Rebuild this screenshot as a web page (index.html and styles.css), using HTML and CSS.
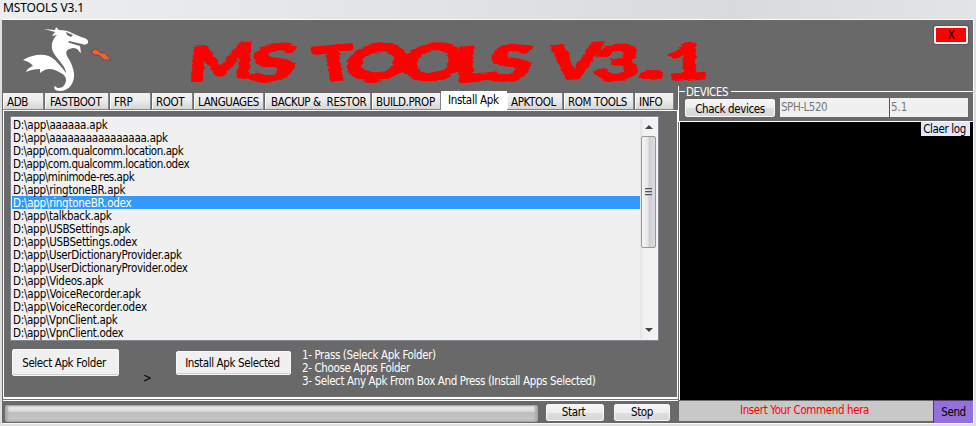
FILE: index.html
```html
<!DOCTYPE html>
<html lang="en">
<head>
<meta charset="utf-8">
<title>MSTOOLS V3.1</title>
<link rel="stylesheet" href="styles.css">
</head>
<body>
<div class="window">
  <div class="titlebar">MSTOOLS V3.1</div>
  <div class="client">
    <header class="header">
      <svg class="dragon" width="92" height="66" viewBox="0 0 92 66">
        <path fill="#fff" d="M21 3L32 4L33 1L36 4C41 4 46 5 49 7L58 11C63 12 66 14 65 17C63 19 61 19 59 18L46 15C45 16 45 17 47 17L57 20L58 27C55 25 55 22 50 22C44 23 42 25 44 30C48 36 50 41 51 47C52 57 46 65 37 65C32 65 30 62 32 60C36 65 43 60 43 54C43 50 40 48 36 46C29 42 23 42 17 47L17 43C12 43 7 44 3 46C4 43 7 41 10 40C8 37 4 35 0 34C10 28 24 26 32 34C36 38 40 43 43 47C43 41 36 35 32 29C27 23 28 14 34 9L29 10L32 6Z"/>
        <path fill="#696969" d="M43 6L50 9L48 11L44 9Z"/>
        <path fill="#f4641e" stroke="#51436d" stroke-width=".8" d="M68 25L73 23L78 27L82 27L88 34L81 34L76 29L71 29Z"/>
      </svg>
      <svg class="banner" width="520" height="48" viewBox="0 0 520 48" role="img">
        <defs>
          <filter id="rough" x="-2%" y="-10%" width="104%" height="120%">
            <feTurbulence type="fractalNoise" baseFrequency=".03 .3" numOctaves="2" seed="4" result="n"/>
            <feDisplacementMap in="SourceGraphic" in2="n" scale="5" xChannelSelector="R" yChannelSelector="A"/>
          </filter>
        </defs>
        <g class="lettering" filter="url(#rough)">
          <text textLength="66" lengthAdjust="spacingAndGlyphs" transform="translate(0 43) rotate(-4) skewX(-8)">M</text>
          <text textLength="47" lengthAdjust="spacingAndGlyphs" transform="translate(59 43) rotate(-4) skewX(-16)">S</text>
          <text textLength="42" lengthAdjust="spacingAndGlyphs" transform="translate(129 43) rotate(-5) skewX(4)">T</text>
          <text textLength="64" lengthAdjust="spacingAndGlyphs" transform="translate(157 43) rotate(-4) skewX(-10)">O</text>
          <text textLength="64" lengthAdjust="spacingAndGlyphs" transform="translate(212 43) rotate(-4) skewX(-10)">O</text>
          <text textLength="42" lengthAdjust="spacingAndGlyphs" transform="translate(267 43) rotate(-5) skewX(-5)">L</text>
          <text textLength="45" lengthAdjust="spacingAndGlyphs" transform="translate(297 43) rotate(-4) skewX(-16)">S</text>
          <text textLength="50" lengthAdjust="spacingAndGlyphs" transform="translate(361 42) rotate(-3) skewX(-10)">V</text>
          <text textLength="46" lengthAdjust="spacingAndGlyphs" transform="translate(406 42) rotate(-3) skewX(-5)">3</text>
          <text textLength="30" lengthAdjust="spacingAndGlyphs" transform="translate(449 40)">.</text>
          <text textLength="44" lengthAdjust="spacingAndGlyphs" transform="translate(478 42) rotate(-5) skewX(-4)">1</text>
        </g>
      </svg>
      <button class="close">X</button>
    </header>
    <div class="columns">
      <main class="left">
        <nav class="tabs">
          <span class="tab adb">ADB</span><span class="tab fastboot">FASTBOOT</span><span class="tab frp">FRP</span><span class="tab root">ROOT</span><span class="tab languages">LANGUAGES</span><span class="tab backup">BACKUP &amp;&nbsp; RESTOR</span><span class="tab buildprop">BUILD.PROP</span><span class="tab install active">Install Apk</span><span class="tab apktool">APKTOOL</span><span class="tab rom">ROM TOOLS</span><span class="tab info">INFO</span>
        </nav>
        <section class="page">
          <div class="listbox">
            <ul class="files">
              <li class="wide">D:\app\aaaaaa.apk</li>
              <li>D:\app\aaaaaaaaaaaaaaaa.apk</li>
              <li class="tight">D:\app\com.qualcomm.location.apk</li>
              <li class="tight">D:\app\com.qualcomm.location.odex</li>
              <li class="tight">D:\app\minimode-res.apk</li>
              <li>D:\app\ringtoneBR.apk</li>
              <li class="selected">D:\app\ringtoneBR.odex</li>
              <li class="snug">D:\app\talkback.apk</li>
              <li class="snug">D:\app\USBSettings.apk</li>
              <li>D:\app\USBSettings.odex</li>
              <li class="snug">D:\app\UserDictionaryProvider.apk</li>
              <li class="snug">D:\app\UserDictionaryProvider.odex</li>
              <li>D:\app\Videos.apk</li>
              <li class="wide">D:\app\VoiceRecorder.apk</li>
              <li class="wide">D:\app\VoiceRecorder.odex</li>
              <li class="snug">D:\app\VpnClient.apk</li>
              <li class="snug">D:\app\VpnClient.odex</li>
            </ul>
            <div class="scrollbar">
              <div class="arrow"><svg width="8" height="5"><path d="M0 5L4 1L8 5Z" fill="#444"/></svg></div>
              <div class="thumb"><i></i><i></i><i></i></div>
              <div class="arrow down"><svg width="8" height="5"><path d="M0 0L4 4L8 0Z" fill="#444"/></svg></div>
            </div>
          </div>
          <div class="actions">
            <button class="btn select">Select Apk Folder</button>
            <span class="chevron">&gt;</span>
            <button class="btn installbtn">Install Apk Selected</button>
            <div class="help">
              <div>1- Prass (Seleck Apk Folder)</div>
              <div>2- Choose Apps Folder</div>
              <div>3- Select Any Apk From Box And Press (Install Apps Selected)</div>
            </div>
          </div>
        </section>
        <footer class="status">
          <div class="progress"></div>
          <button class="btn start">Start</button>
          <button class="btn stop">Stop</button>
        </footer>
      </main>
      <aside class="right">
        <div class="devices">
          <div class="legend">DEVICES</div>
          <div class="device-row">
            <button class="btn check">Chack devices</button>
            <div class="field model">SPH-L520</div>
            <div class="field version">5.1</div>
          </div>
        </div>
        <div class="log"><button class="clear">Claer log</button></div>
        <div class="command">
          <div class="prompt">Insert Your Commend hera</div>
          <button class="send">Send</button>
        </div>
      </aside>
    </div>
  </div>
</div>
</body>
</html>
```
FILE: styles.css
```css
* { box-sizing: border-box; }
body {
  margin: 0;
  width: 976px;
  height: 426px;
  overflow: hidden;
  font: 11.5px/13px "DejaVu Sans Condensed", "DejaVu Sans", sans-serif;
  font-stretch: condensed;
  letter-spacing: -.38px;
  color: #000;
  white-space: nowrap;
}
button { font: inherit; letter-spacing: inherit; color: inherit; padding: 0; margin: 0; white-space: nowrap; }
.window { height: 426px; background: #dfe0e2; display: flex; flex-direction: column; padding: 0 2px 2px; }
.titlebar {
  height: 19px;
  margin: 0 -2px;
  padding: 1px 0 0 3px;
  background: linear-gradient(90deg, #eceef0, #e2e4e6 40%, #d9dadc 75%, #e3e4e6);
  font: 12px/14px "Noto Sans", sans-serif;
  letter-spacing: -.15px;
}
.client { height: 405px; background: #696969; border: solid #fafafa; border-width: 1px 1px 1px 0; display: flex; flex-direction: column; }
.header { height: 66px; display: flex; align-items: flex-start; }
.dragon { margin: 6px 0 0 21px; flex: none; }
.banner { margin: 19px 0 0 72px; flex: none; overflow: visible; }
.lettering { font: 900 48px Lato, sans-serif; fill: #f00; stroke: #f00; stroke-width: 1.8; letter-spacing: 0; }
.close { width: 34px; height: 18px; margin: 6px 5px 0 auto; background: #f00; border: 2px solid #f0f0f0; border-radius: 2px; box-shadow: 0 0 0 1px #55555c; line-height: 13px; }

.columns { flex: 1; display: flex; }
.left { width: 676px; display: flex; flex-direction: column; padding-left: 1px; }
.tabs { height: 25px; padding-top: 5px; display: flex; align-items: flex-end; border-bottom: 1px solid #fff; }
.tab { height: 17px; flex: none; line-height: 18px; background: linear-gradient(#f3f3f3, #ececec 45%, #d5d5d5); border: solid #858590; border-width: 0 1px 1px 0; box-shadow: inset 1px 0 #fafafa; padding-left: 4px; margin-right: 1px; }
.adb { width: 41px; }
.fastboot { width: 64px; padding-left: 5px; }
.frp { width: 41px; }
.root { width: 41px; }
.languages { width: 70px; }
.backup { width: 106px; padding-left: 6px; }
.buildprop { width: 69px; margin: 0; }
.install { width: 66px; padding-left: 7px; letter-spacing: -.3px; }
.active { height: 19px; background: #fff; border: 0; line-height: 18px; margin: 0; }
.apktool { width: 56px; }
.rom { width: 70px; }
.info { width: 39px; }

.page { height: 288px; border: solid #fff; border-width: 0 1px 2px; padding: 5px 0 0 6px; }
.listbox { width: 649px; height: 225px; display: flex; background: #f0f0f0; border: 1px solid #808692; padding: 1px 1px 1px 1px; box-shadow: inset 0 1px #fff; }
.files { width: 629px; list-style: none; margin: 0; padding: 0; }
.files li { height: 13px; padding-left: 1px; line-height: 14px; letter-spacing: -.25px; }
.files .tight { letter-spacing: -.44px; }
.files .snug { letter-spacing: -.29px; }
.files .wide { letter-spacing: -.21px; }
.files .selected { background: #39f; color: #fff; }
.scrollbar { width: 17px; margin-left: auto; display: flex; flex-direction: column; background: linear-gradient(90deg, #e4e4e4, #f1f1f1 25%, #f3f3f3); }
.arrow { height: 17px; display: flex; align-items: center; justify-content: center; }
.down { margin-top: auto; }
.thumb { width: 15px; height: 112px; margin: 1px auto 0; border: 1px solid #979797; border-radius: 2px; background: linear-gradient(90deg, #f5f5f5, #e6e6e8 48%, #cdced3 52%, #dcdde0); display: flex; flex-direction: column; gap: 1px; align-items: center; justify-content: center; }
.thumb i { width: 7px; height: 2px; border-top: 1px solid #555; border-bottom: 1px solid #bbb; }
.actions { display: flex; align-items: flex-start; padding-top: 7px; }
.btn { flex: none; border: 1px solid #f8f8f8; border-radius: 2px; background: linear-gradient(#f5f5f5, #eee 50%, #dedede 52%, #d8d8d8); text-align: center; }
.select { width: 107px; height: 27px; margin: 1px 0 0 2px; padding: 1px 3px 0 0; background: #f0f0f0; box-shadow: inset 0 -1px #ccc; }
.chevron { width: 57px; padding: 24px 0 0 24px; }
.installbtn { width: 115px; height: 24px; margin-top: 3px; padding-right: 2px; background: #f0f0f0; box-shadow: inset 0 -1px #ccc; }
.help { color: #fff; padding: 1px 0 0 11px; }
.status { flex: 1; border-top: 1px solid #70747b; box-shadow: inset 0 1px #fff; padding: 4px 0 0 2px; display: flex; align-items: flex-start; }
.progress { width: 533px; height: 17px; margin-top: 1px; border: 1px solid #a9a9a9; border-radius: 2px; background: linear-gradient(#f3f3f3, #d6d6d6 35%, #bdbdbd 45%, #c7c7c7); box-shadow: inset 2px 0 2px #aaa, inset -2px 0 2px #aaa; }
.start { width: 58px; height: 17px; margin-left: 8px; padding-right: 3px; line-height: 15px; }
.stop { width: 56px; height: 17px; margin-left: 10px; line-height: 15px; }

.right { flex: 1; display: flex; flex-direction: column; }
.devices { height: 36px; display: flex; flex-direction: column; border: solid #fff; border-width: 0 0 1px 1px; }
.legend { height: 11px; line-height: 10px; color: #fff; display: flex; align-items: center; }
.legend::before { content: ""; width: 6px; height: 1px; background: #fff; margin-right: 1px; }
.legend::after { content: ""; flex: 1; height: 1px; background: #fff; margin-left: 3px; }
.device-row { display: flex; }
.check { width: 90px; height: 18px; margin: 2px 0 0 6px; padding-top: 1px; line-height: 16px; }
.field { height: 19px; margin-top: 1px; background: #f0f0f0; color: #777; padding: 3px 0 0 1px; }
.model { width: 109px; margin-left: 5px; letter-spacing: -.45px; }
.version { width: 79px; border-left: 1px solid #555; letter-spacing: 0; }
.log { height: 278px; background: #000; border-left: 1px solid #fff; display: flex; justify-content: flex-end; margin-left: 1px; align-items: flex-start; }
.clear { width: 49px; height: 14px; margin-right: 3px; padding: 1px 2px 0 0; border: 0; background: #e6e6fa; }
.command { display: flex; height: 23px; }
.prompt { width: 254px; height: 20px; margin: 1px 0 0 1px; padding-right: 3px; background: #c8c8c8; color: #f00; text-align: center; line-height: 18px; }
.send { flex: 1; border: solid #4b3b76; border-width: 1px 0 0 1px; background: #9370db; }
```
